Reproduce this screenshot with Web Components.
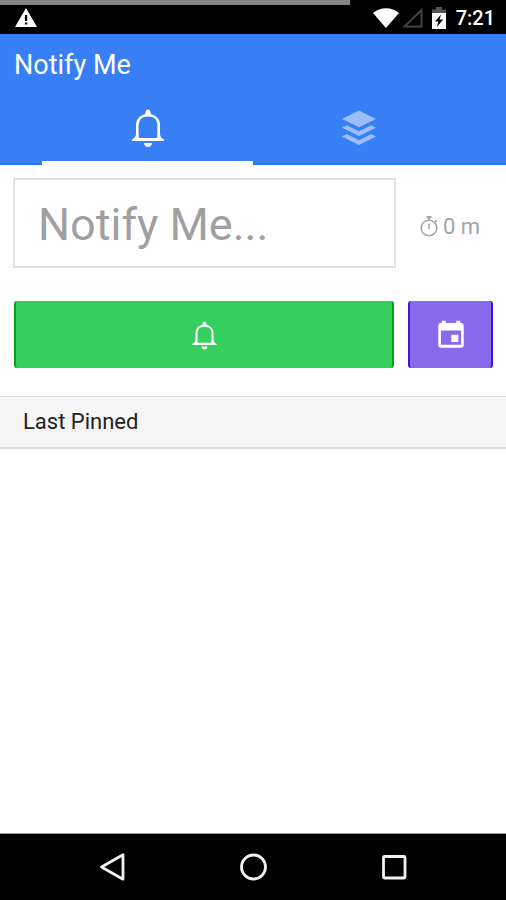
<!DOCTYPE html>
<html lang="en">
<head>
<meta charset="utf-8">
<meta name="viewport" content="width=device-width, initial-scale=1">
<title>Notify Me</title>
<style>
html, body { height: 100%; margin: 0; }
body { font-family: Roboto, "Liberation Sans", sans-serif; background: #fff; }
</style>
</head>
<body>
<notify-app></notify-app>

<template id="t-app">
<style>
:host { display: flex; flex-direction: column; min-height: 100vh; background: #fff; }
main { flex: 1; display: flex; flex-direction: column; }
.actions { display: flex; gap: 14px; padding: 0 13px 0 14px; margin: 33px 0 28px; }
.actions color-button:first-child { flex: 1; }
.actions color-button:last-child { width: 85px; }
</style>
<status-bar></status-bar>
<app-header>Notify Me</app-header>
<main>
<reminder-field></reminder-field>
<div class="actions">
<color-button label="Pin notification" style="--fill:#35cf5f;--edge:#0aa316;--size:33px"><app-icon name="bell"></app-icon></color-button>
<color-button label="Schedule" style="--fill:#886aea;--edge:#4a0fd8;--size:34px"><app-icon name="event"></app-icon></color-button>
</div>
<list-divider>Last Pinned</list-divider>
</main>
<nav-bar></nav-bar>
</template>

<template id="t-status">
<style>
:host { display: flex; position: relative; align-items: center; justify-content: space-between; box-sizing: border-box; height: 34px; padding: 0 11px 0 14px; background: #000; color: #fff; font-size: 20px; font-weight: 500; line-height: 24px; }
.progress { position: absolute; left: 0; top: 0; width: 69.2%; height: 5px; background: #858585; }
.right { display: flex; align-items: center; padding-top: 2px; }
.warn { --size: 24px; }
.wifi { --w: 26px; --h: 20px; margin-right: 3px; }
.cell { --w: 21px; --h: 20px; margin-right: 8px; }
.batt { --w: 16px; --h: 22px; margin-right: 9px; }
</style>
<span class="progress"></span>
<app-icon class="warn" name="warning"></app-icon>
<div class="right">
<app-icon class="wifi" name="wifi"></app-icon>
<app-icon class="cell" name="cell"></app-icon>
<app-icon class="batt" name="battery"></app-icon>
<time>7:21</time>
</div>
</template>

<template id="t-header">
<style>
:host { display: block; background: #387ef5; border-bottom: 1px solid #1c6bef; color: #fff; }
h1 { margin: 0; padding: 15px 14px 0; font-size: 27px; line-height: 32px; font-weight: 400; }
nav { display: grid; grid-template-columns: 1fr 1fr; width: 83.4%; margin: 11px auto -1px; }
button { all: unset; box-sizing: border-box; display: flex; align-items: center; justify-content: center; height: 73px; border-bottom: 4px solid transparent; color: #fff; cursor: pointer; --size: 44px; }
button[aria-selected=true] { border-color: #fff; }
button[aria-selected=false] app-icon { opacity: .5; }
</style>
<h1><slot></slot></h1>
<nav role="tablist">
<button role="tab" aria-selected="true" aria-label="Notifications"><app-icon name="bell"></app-icon></button>
<button role="tab" aria-selected="false" aria-label="Stacks"><app-icon name="layers"></app-icon></button>
</nav>
</template>

<template id="t-field">
<style>
:host { display: flex; align-items: center; padding: 13px 26px 0 13px; }
input { flex: 1; min-width: 0; box-sizing: border-box; height: 90px; padding: 2px 23px 0; border: 2px solid #e2e2e2; border-radius: 0; background: #fff; color: #333; font: 400 45px/56px Roboto, "Liberation Sans", sans-serif; outline: none; }
input::placeholder { color: #a0a0a0; opacity: 1; }
button { all: unset; display: flex; align-items: center; gap: 4px; margin-left: 23px; padding-top: 7px; color: #a3a3a3; font-size: 22px; line-height: 28px; cursor: pointer; white-space: nowrap; }
app-icon { --w: 20px; --h: 22px; margin-bottom: 2px; }
</style>
<input type="text" aria-label="Reminder text" placeholder="Notify Me...">
<button><app-icon name="timer"></app-icon>0 m</button>
</template>

<template id="t-button">
<style>
:host { display: block; }
button { box-sizing: border-box; width: 100%; height: 67px; display: flex; align-items: center; justify-content: center; margin: 0; padding: 0; color: #fff; background: var(--fill); border: solid var(--edge); border-width: 0 2px; border-radius: 3px; cursor: pointer; }
</style>
<button><slot></slot></button>
</template>

<template id="t-divider">
<style>
:host { display: block; background: #f5f5f5; border: solid #dedede; border-width: 1px 0 2px; color: #222; }
h2 { margin: 0; padding: 10px 23px; font-size: 22px; line-height: 30px; font-weight: 400; }
</style>
<h2><slot></slot></h2>
</template>

<template id="t-nav">
<style>
:host { display: block; background: #000; border-top: 1px solid #999; }
nav { display: grid; grid-template-columns: repeat(3, 1fr); width: 83.4%; margin: 0 auto; }
button { all: unset; display: flex; align-items: center; justify-content: center; height: 66px; color: #f2f2f2; cursor: pointer; --size: 30px; }
</style>
<nav aria-label="System">
<button aria-label="Back"><app-icon name="back"></app-icon></button>
<button aria-label="Home"><app-icon name="home"></app-icon></button>
<button aria-label="Recent apps"><app-icon name="recent"></app-icon></button>
</nav>
</template>

<script>
const icons = {
  bell: ['0 -1 44 44', '<path d="M11.300 33V19C11.300 13 15.500 9.200 22 9.200S32.700 13 32.700 19V33" fill="none" stroke="currentColor" stroke-width="2.600"/><path d="M5.800 35v-1.200c2.200-1.300 4.200-2.600 4.200-5.800h2.600v4h18.800v-4H34c0 3.200 2 4.500 4.200 5.800V35z"/><path d="M18.500 9c1-.8.6-5.500 3.500-5.500S24.500 8.200 25.500 9zM18 37h8c-.3 2.600-1.800 4-4 4s-3.700-1.400-4-4z"/>'],
  layers: ['0 -1 44 44', '<path d="M22 4.500l17 8.400L22 21.300 5 12.900zM5 21.700l4.800-2.400L22 25.300l12.200-6 4.800 2.400-17 8.400zM5 30.500l4.800-2.400L22 34.200l12.200-6.100 4.800 2.400-17 8.500z"/>'],
  event: ['0 0 24 24', '<path fill-rule="evenodd" d="M5.500 2h2.800v1.600h7.400V2h2.800v1.600h.7c1 0 1.800.8 1.800 1.800v13.800c0 1-.8 1.800-1.800 1.800H4.800c-1 0-1.800-.8-1.800-1.800V5.400c0-1 .8-1.800 1.800-1.800h.7zM4.900 8.800v10h14.200v-10z"/><path d="M12.200 11.800h5v5.200h-5z"/>'],
  timer: ['0 0 20 22', '<circle cx="10" cy="13" r="7.800" fill="none" stroke="currentColor" stroke-width="1.500"/><path d="M7.500 1h5v2.200h-1.600v2H9.100v-2H7.500zM9.200 8.500h1.600v5.500H9.200zM15.500 6l1.200-1.400 1.700 1.600L17 7.500z"/>'],
  warning: ['0 0 24 24', '<path fill-rule="evenodd" d="M12 3L1 22h22zM10.900 10h2.300v6h-2.300zm0 7.500h2.300v2h-2.300z"/>'],
  wifi: ['0 0 26 20', '<path d="M0 5C7-1.300 19-1.300 26 5L13 20z"/>'],
  cell: ['0 0 21 20', '<path d="M2.500 18.500h17V2z" fill="none" stroke="#444" stroke-width="2"/>'],
  battery: ['0 0 16 22', '<path d="M1 2.500h4V0h6v2.500h4V6H1z" fill="#555"/><path fill-rule="evenodd" d="M1 6h14v16H1zM10 7.500l-6 7h3.400l-1.600 5.500 6.400-7.500H8.600z"/>'],
  back: ['0 0 30 30', '<path d="M4.500 15L26 2.800v24.400z" fill="none" stroke="currentColor" stroke-width="2.800" stroke-linejoin="round"/>'],
  home: ['0 0 30 30', '<circle cx="15.500" cy="15" r="12" fill="none" stroke="currentColor" stroke-width="2.800"/>'],
  recent: ['0 0 30 30', '<rect x="4.500" y="4.500" width="21.500" height="21.500" rx="1" fill="none" stroke="currentColor" stroke-width="2.800"/>']
};

class TemplateElement extends HTMLElement {
  constructor() {
    super();
    this.attachShadow({ mode: 'open' })
      .append(document.getElementById(this.constructor.template).content.cloneNode(true));
  }
}

class AppIcon extends HTMLElement {
  connectedCallback() {
    if (this.shadowRoot) return;
    const [box, shape] = icons[this.getAttribute('name')];
    this.attachShadow({ mode: 'open' }).innerHTML =
      `<style>:host{display:block;flex:none;width:var(--w,var(--size));height:var(--h,var(--size))}svg{display:block;width:100%;height:100%}</style>
      <svg viewBox="${box}" fill="currentColor" aria-hidden="true">${shape}</svg>`;
  }
}
customElements.define('app-icon', AppIcon);

class AppHeader extends TemplateElement {
  static template = 't-header';
  connectedCallback() {
    const tabs = this.shadowRoot.querySelectorAll('button');
    tabs.forEach(tab => tab.onclick = () =>
      tabs.forEach(t => t.setAttribute('aria-selected', String(t === tab))));
  }
}
customElements.define('app-header', AppHeader);

class ColorButton extends TemplateElement {
  static template = 't-button';
  connectedCallback() {
    this.shadowRoot.querySelector('button').setAttribute('aria-label', this.getAttribute('label'));
  }
}
customElements.define('color-button', ColorButton);

customElements.define('status-bar', class extends TemplateElement { static template = 't-status'; });
customElements.define('reminder-field', class extends TemplateElement { static template = 't-field'; });
customElements.define('list-divider', class extends TemplateElement { static template = 't-divider'; });
customElements.define('nav-bar', class extends TemplateElement { static template = 't-nav'; });
customElements.define('notify-app', class extends TemplateElement { static template = 't-app'; });
</script>
</body>
</html>
